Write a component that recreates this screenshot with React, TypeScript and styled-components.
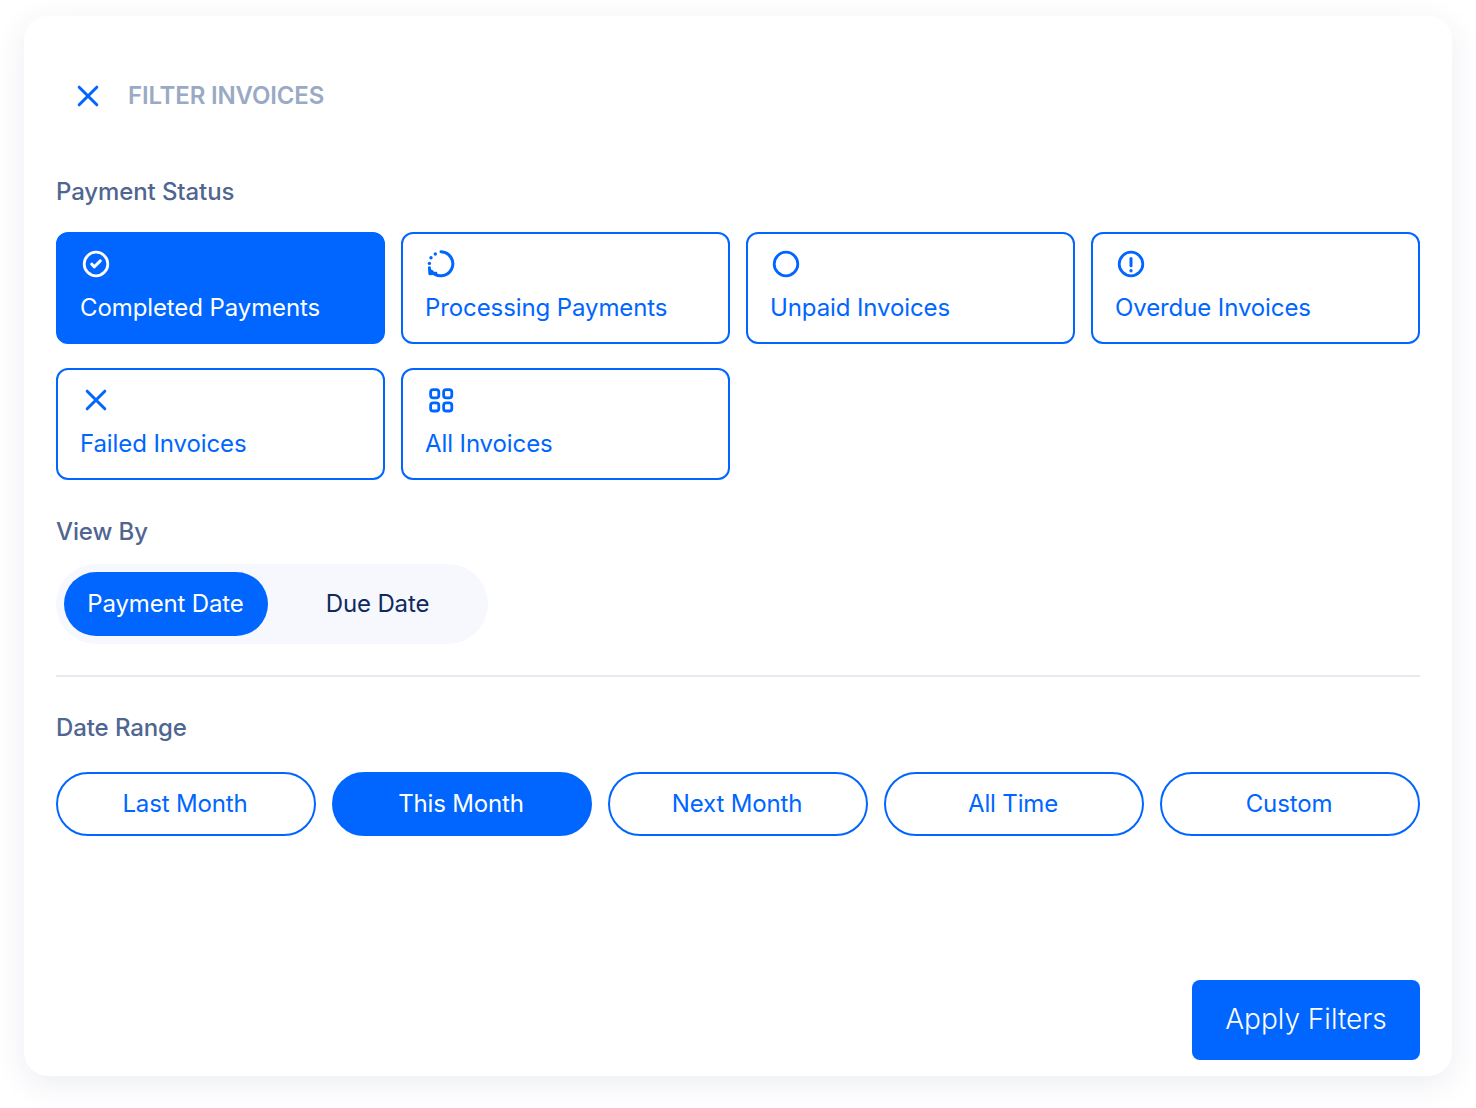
import React, { useState } from "react";
import styled, { createGlobalStyle } from "styled-components";

const BLUE = "#0066ff";

const GlobalStyle = createGlobalStyle`
	html, body {
		margin: 0;
		padding: 0;
		background: #ffffff;
	}
	* {
		box-sizing: border-box;
	}
	body {
		font-family: "Inter", "Liberation Sans", sans-serif;
	}
`;

type ActiveProp = {
	$active?: boolean;
};

const CheckIcon = () => (
	<svg width="32" height="32" viewBox="0 0 32 32" fill="none" stroke="currentColor" strokeWidth="2.8" strokeLinecap="round" strokeLinejoin="round">
		<circle cx="16" cy="16" r="11.8" />
		<path d="M11.7 16.2l2.7 2.6 5.9-5.9" strokeWidth="3" />
	</svg>
);

const ProcessingIcon = () => (
	<svg width="32" height="32" viewBox="0 0 32 32" fill="none" stroke="currentColor" strokeWidth="3" strokeLinecap="round" strokeLinejoin="round">
		<path d="M16 3.8A12 12 0 1 1 6.2 23" />
		<path d="M4.4 19.8l.5 6 6-.5" />
		<circle cx="10.3" cy="6" r="1.7" fill="currentColor" stroke="none" />
		<circle cx="6" cy="9.8" r="1.7" fill="currentColor" stroke="none" />
		<circle cx="4.4" cy="15.4" r="1.7" fill="currentColor" stroke="none" />
	</svg>
);

const CircleIcon = () => (
	<svg width="32" height="32" viewBox="0 0 32 32" fill="none" stroke="currentColor" strokeWidth="2.8">
		<circle cx="16" cy="16" r="11.8" />
	</svg>
);

const AlertIcon = () => (
	<svg width="32" height="32" viewBox="0 0 32 32" fill="none" stroke="currentColor" strokeWidth="2.8" strokeLinecap="round">
		<circle cx="16" cy="16" r="11.8" />
		<path d="M16 10.4v7.4" strokeWidth="3" />
		<path d="M16 22.6v.2" strokeWidth="3.2" />
	</svg>
);

const CrossIcon = () => (
	<svg width="32" height="32" viewBox="0 0 32 32" fill="none" stroke="currentColor" strokeWidth="3" strokeLinecap="round">
		<path d="M7.2 7.2l17.6 17.6M24.8 7.2L7.2 24.8" />
	</svg>
);

const GridIcon = () => (
	<svg width="32" height="32" viewBox="0 0 32 32" fill="none" stroke="currentColor" strokeWidth="2.8">
		<rect x="5.6" y="5.6" width="8.2" height="8.2" rx="2.6" />
		<rect x="18.6" y="5.6" width="8.2" height="8.2" rx="2.6" />
		<rect x="5.6" y="18.8" width="8.2" height="8.2" rx="2.6" />
		<rect x="18.6" y="18.8" width="8.2" height="8.2" rx="2.6" />
	</svg>
);

const statuses = [
	{ label: "Completed Payments", icon: <CheckIcon /> },
	{ label: "Processing Payments", icon: <ProcessingIcon /> },
	{ label: "Unpaid Invoices", icon: <CircleIcon /> },
	{ label: "Overdue Invoices", icon: <AlertIcon /> },
	{ label: "Failed Invoices", icon: <CrossIcon /> },
	{ label: "All Invoices", icon: <GridIcon /> },
];

const ranges = ["Last Month", "This Month", "Next Month", "All Time", "Custom"];

export default function App() {
	const [status, setStatus] = useState("Completed Payments");
	const [viewBy, setViewBy] = useState("Payment Date");
	const [range, setRange] = useState("This Month");

	return (
		<>
			<GlobalStyle />
			<Page>
				<Card>
					<Header>
						<CloseButton aria-label="Close">
							<CrossIcon />
						</CloseButton>
						<Title>FILTER INVOICES</Title>
					</Header>

					<PaymentLabel>Payment Status</PaymentLabel>
					<StatusGrid>
						{statuses.map((item) => (
							<StatusTile
								key={item.label}
								$active={status === item.label}
								onClick={() => setStatus(item.label)}
							>
								<TileIcon>{item.icon}</TileIcon>
								<TileText>{item.label}</TileText>
							</StatusTile>
						))}
					</StatusGrid>

					<ViewLabel>View By</ViewLabel>
					<Toggle>
						<ToggleButton
							$active={viewBy === "Payment Date"}
							onClick={() => setViewBy("Payment Date")}
						>
							Payment Date
						</ToggleButton>
						<ToggleButton
							$active={viewBy === "Due Date"}
							onClick={() => setViewBy("Due Date")}
						>
							Due Date
						</ToggleButton>
					</Toggle>

					<Divider />

					<RangeLabel>Date Range</RangeLabel>
					<RangeRow>
						{ranges.map((item) => (
							<RangePill
								key={item}
								$active={range === item}
								onClick={() => setRange(item)}
							>
								{item}
							</RangePill>
						))}
					</RangeRow>

					<Footer>
						<ApplyButton>Apply Filters</ApplyButton>
					</Footer>
				</Card>
			</Page>
		</>
	);
}

const Page = styled.div`
	width: 1476px;
	height: 1108px;
	padding: 16px 24px 32px;
	overflow: hidden;
`;

const Card = styled.div`
	display: flex;
	flex-direction: column;
	height: 1060px;
	padding: 0 32px 16px;
	background: #ffffff;
	border-radius: 24px;
	box-shadow: 0 8px 32px rgba(40, 60, 120, 0.09);
`;

const Header = styled.div`
	display: flex;
	align-items: center;
	height: 48px;
	margin-top: 56px;
	padding-left: 16px;
`;

const CloseButton = styled.button`
	display: flex;
	width: 32px;
	height: 32px;
	padding: 0;
	border: none;
	background: none;
	color: ${BLUE};
	cursor: pointer;
`;

const Title = styled.h1`
	margin: 0 0 0 24px;
	font-size: 24px;
	font-weight: 600;
	line-height: 32px;
	letter-spacing: -0.16px;
	color: #9aaac5;
`;

const SectionLabel = styled.h2`
	margin: 0;
	font-size: 24px;
	font-weight: 500;
	line-height: 32px;
	letter-spacing: -0.1px;
	color: #4f6690;
`;

const PaymentLabel = styled(SectionLabel)`
	margin-top: 56px;
`;

const ViewLabel = styled(SectionLabel)`
	margin-top: 36px;
`;

const RangeLabel = styled(SectionLabel)`
	margin-top: 35px;
`;

const StatusGrid = styled.div`
	display: grid;
	grid-template-columns: repeat(4, 329px);
	grid-auto-rows: 112px;
	column-gap: 16px;
	row-gap: 24px;
	margin-top: 24px;
`;

const StatusTile = styled.button<ActiveProp>`
	display: flex;
	flex-direction: column;
	align-items: flex-start;
	padding: 14px 22px 0;
	border: 2px solid ${BLUE};
	border-radius: 12px;
	background: ${(props) => (props.$active ? BLUE : "#ffffff")};
	color: ${(props) => (props.$active ? "#ffffff" : BLUE)};
	font-family: inherit;
	text-align: left;
	cursor: pointer;
`;

const TileIcon = styled.span`
	display: flex;
	width: 32px;
	height: 32px;
`;

const TileText = styled.span`
	margin-top: 12px;
	font-size: 24px;
	font-weight: 400;
	line-height: 32px;
	letter-spacing: -0.1px;
`;

const Toggle = styled.div`
	display: flex;
	gap: 8px;
	width: 432px;
	height: 80px;
	margin-top: 16px;
	padding: 8px;
	border-radius: 40px;
	background: #f7f8fd;
`;

const ToggleButton = styled.button<ActiveProp>`
	width: 204px;
	height: 64px;
	padding: 0 1px 2px 0;
	border: none;
	border-radius: 32px;
	background: ${(props) => (props.$active ? BLUE : "transparent")};
	color: ${(props) => (props.$active ? "#ffffff" : "#0f2a5f")};
	font-family: inherit;
	font-size: 24px;
	letter-spacing: -0.15px;
	cursor: pointer;
`;

const Divider = styled.hr`
	width: 100%;
	height: 2px;
	margin: 31px 0 0;
	border: none;
	background: #e8eaf2;
`;

const RangeRow = styled.div`
	display: grid;
	grid-template-columns: repeat(5, 260px);
	column-gap: 16px;
	margin-top: 28px;
`;

const RangePill = styled.button<ActiveProp>`
	height: 64px;
	padding: 0 2px 2px 0;
	border: 2px solid ${BLUE};
	border-radius: 32px;
	background: ${(props) => (props.$active ? BLUE : "#ffffff")};
	color: ${(props) => (props.$active ? "#ffffff" : BLUE)};
	font-family: inherit;
	font-size: 24px;
	letter-spacing: -0.15px;
	cursor: pointer;
`;

const Footer = styled.div`
	display: flex;
	justify-content: flex-end;
	margin-top: auto;
`;

const ApplyButton = styled.button`
	width: 228px;
	height: 80px;
	padding: 0 0 2px;
	border: none;
	border-radius: 8px;
	background: ${BLUE};
	color: #ffffff;
	font-family: inherit;
	font-size: 28px;
	font-weight: 300;
	cursor: pointer;
`;
